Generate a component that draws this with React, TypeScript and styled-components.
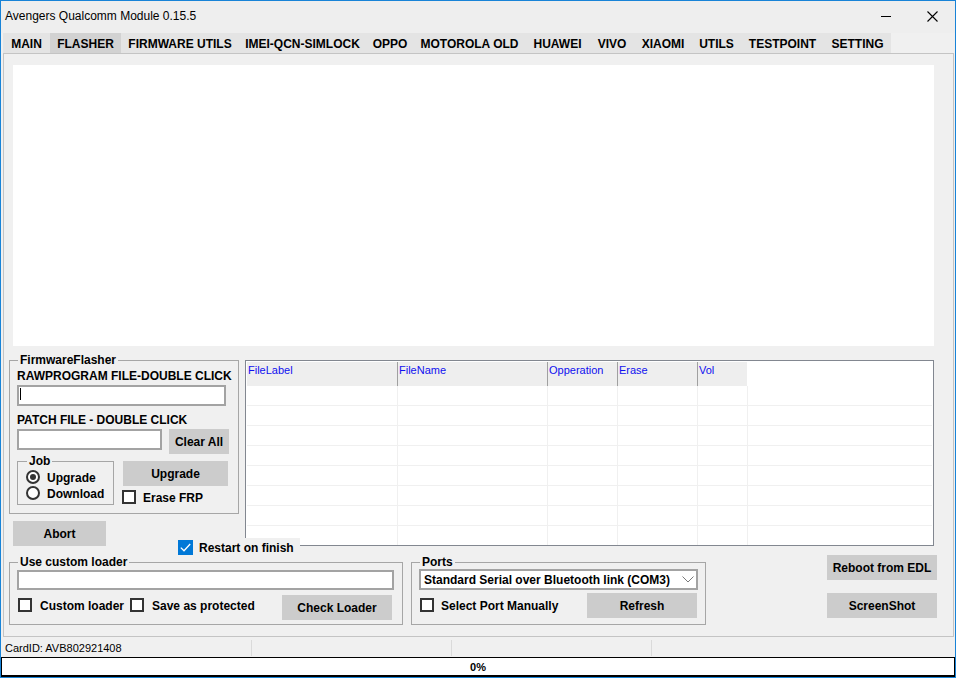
import React from 'react';
import styled, { createGlobalStyle } from 'styled-components';

const GlobalStyle = createGlobalStyle`
    * {
        box-sizing: border-box;
    }

    html,
    body {
        margin: 0;
        padding: 0;
        background: #f0f0f0;
        overflow: hidden;
    }

    body {
        font-family: "Liberation Sans", Arial, sans-serif;
        color: #000;
    }
`;

const Window = styled.div`
    width: 956px;
    height: 678px;
    border: 1px solid #1883d7;
    background: #f0f0f0;
    display: flex;
    flex-direction: column;
`;

const TitleBar = styled.div`
    height: 32px;
    flex: none;
    display: flex;
    align-items: center;
    background: #eeeeee;
    padding: 0 0 2px 4px;
    font-size: 12px;
`;

const WinControls = styled.div`
    margin-left: auto;
    display: flex;
    height: 100%;
`;

const WinButton = styled.div`
    width: 46px;
    height: 100%;
    display: flex;
    align-items: center;
    justify-content: center;
`;

const TabStrip = styled.div`
    height: 20px;
    flex: none;
    display: flex;
    margin-left: 2px;
`;

const Tab = styled.div<{ $w: number; $active?: boolean }>`
    width: ${(p) => p.$w}px;
    height: 20px;
    padding-top: 3px;
    background: ${(p) => (p.$active ? '#d2d2d2' : '#e4e4e4')};
    font-size: 12px;
    font-weight: bold;
    line-height: 17px;
    text-align: center;
    white-space: nowrap;
`;

const TabPage = styled.div`
    height: 584px;
    flex: none;
    margin: 0 1px 0 2px;
    border: 1px solid #c4c4c4;
    padding-left: 5px;
    display: flex;
    flex-direction: column;
`;

const LogBox = styled.div`
    flex: none;
    width: 921px;
    height: 281px;
    margin: 11px 0 0 4px;
    background: #fff;
`;

const MidRow = styled.div`
    position: relative;
    flex: none;
    height: 200px;
    display: flex;
    align-items: flex-start;
`;

const Column = styled.div<{ $mt?: number; $ml?: number; $gap?: number }>`
    display: flex;
    flex-direction: column;
    align-items: flex-start;
    gap: ${(p) => p.$gap ?? 0}px;
    margin-top: ${(p) => p.$mt ?? 0}px;
    margin-left: ${(p) => p.$ml ?? 0}px;
`;

const Row = styled.div<{ $mt?: number; $fill?: boolean }>`
    display: flex;
    align-items: flex-start;
    align-self: ${(p) => (p.$fill ? 'stretch' : 'auto')};
    margin-top: ${(p) => p.$mt ?? 0}px;
`;

const Group = styled.fieldset<{ $w: number; $px?: number; $pb?: number; $ml?: number }>`
    width: ${(p) => p.$w}px;
    min-width: 0;
    margin: 0 0 0 ${(p) => p.$ml ?? 0}px;
    padding: 0 ${(p) => p.$px ?? 7}px ${(p) => p.$pb ?? 0}px;
    border: 1px solid #a6a6a6;
    display: flex;
    flex-direction: column;
    align-items: flex-start;
`;

const Legend = styled.legend`
    margin-left: 1px;
    padding: 0 2px;
    font-size: 12px;
    font-weight: bold;
    line-height: 14px;
`;

const FieldLabel = styled.div<{ $mt?: number }>`
    height: 14px;
    margin-top: ${(p) => p.$mt ?? 0}px;
    padding-top: 1px;
    font-size: 12px;
    font-weight: bold;
    line-height: 14px;
    white-space: nowrap;
`;

const TextField = styled.div<{ $w: number; $h: number; $mt?: number; $caret?: boolean }>`
    position: relative;
    width: ${(p) => p.$w}px;
    height: ${(p) => p.$h}px;
    margin-top: ${(p) => p.$mt ?? 0}px;
    border: 2px solid #a3a3a3;
    background: #fff;

    &::before {
        content: '';
        display: ${(p) => (p.$caret ? 'block' : 'none')};
        position: absolute;
        left: 1px;
        top: 1px;
        width: 1px;
        height: 12px;
        background: #000;
    }
`;

const Button = styled.div<{ $w: number; $mt?: number; $ml?: number; $mr?: number; $push?: boolean }>`
    flex: none;
    width: ${(p) => p.$w}px;
    height: 25px;
    margin: ${(p) => p.$mt ?? 0}px ${(p) => p.$mr ?? 0}px 0
        ${(p) => (p.$push ? 'auto' : `${p.$ml ?? 0}px`)};
    background: #cccccc;
    display: flex;
    align-items: center;
    justify-content: center;
    font-size: 12px;
    font-weight: bold;
    white-space: nowrap;
`;

const Option = styled.div<{ $mt?: number; $ml?: number; $gap?: number }>`
    display: flex;
    align-items: center;
    gap: ${(p) => p.$gap ?? 7}px;
    margin-top: ${(p) => p.$mt ?? 0}px;
    margin-left: ${(p) => p.$ml ?? 0}px;
    font-size: 12px;
    font-weight: bold;
    line-height: 14px;
    white-space: nowrap;

    span + span {
        padding-top: 2px;
        line-height: 12px;
    }
`;

const Box = styled.span`
    flex: none;
    width: 14px;
    height: 14px;
    border: 2px solid #333;
    background: #fff;
`;

const RadioRow = styled.div`
    height: 16px;
    display: flex;
    align-items: center;
    gap: 7px;
    font-size: 12px;
    font-weight: bold;

    span + span {
        padding-top: 2px;
    }
`;

const Radio = styled.span<{ $checked?: boolean }>`
    flex: none;
    width: 14px;
    height: 14px;
    border: 2px solid #333;
    border-radius: 50%;
    background: #fff;
    display: flex;
    align-items: center;
    justify-content: center;

    &::after {
        content: '';
        width: 6px;
        height: 6px;
        border-radius: 50%;
        background: ${(p) => (p.$checked ? '#333' : 'transparent')};
    }
`;

const Grid = styled.div`
    flex: none;
    width: 689px;
    height: 186px;
    margin: 14px 0 0 6px;
    padding: 1px;
    border: 1px solid #828790;
    background: #fff;
    overflow: hidden;
`;

const GridRow = styled.div<{ $head?: boolean }>`
    display: flex;
    height: ${(p) => (p.$head ? 24 : 20)}px;
    border-bottom: ${(p) => (p.$head ? 'none' : '1px solid #f0f0f0')};
`;

const HeadCell = styled.div<{ $w: number; $first?: boolean }>`
    flex: none;
    width: ${(p) => p.$w}px;
    padding: 2px 0 0 1px;
    border-left: ${(p) => (p.$first ? 'none' : '1px solid #a0a0a0')};
    background: #eeeeee;
    color: #1010f0;
    font-size: 11px;
    line-height: 13px;
`;

const BodyCell = styled.div<{ $w?: number; $first?: boolean }>`
    flex: ${(p) => (p.$w ? 'none' : '1')};
    width: ${(p) => (p.$w ? `${p.$w}px` : 'auto')};
    border-left: ${(p) => (p.$first ? 'none' : '1px solid #f0f0f0')};
`;

const RestartToggle = styled.div`
    position: absolute;
    left: 167px;
    top: 192px;
    height: 19px;
    padding: 0 6px 0 2px;
    display: flex;
    align-items: center;
    gap: 6px;
    background: #f0f0f0;
    font-size: 12px;
    font-weight: bold;
    white-space: nowrap;
`;

const BlueCheck = styled.span`
    flex: none;
    width: 15px;
    height: 15px;
    background: #0078d7;
    display: flex;
    align-items: center;
    justify-content: center;
`;

const BottomRow = styled.div`
    flex: none;
    display: flex;
    align-items: flex-start;
    margin-top: 9px;
`;

const Select = styled.div`
    width: 279px;
    height: 21px;
    border: 2px solid #a3a3a3;
    background: #fff;
    display: flex;
    align-items: center;
    padding: 0 2px 0 3px;
    font-size: 12px;
    font-weight: bold;
    white-space: nowrap;

    svg {
        margin-left: auto;
    }
`;

const StatusBar = styled.div`
    height: 20px;
    flex: none;
    display: flex;
    font-size: 11px;
`;

const StatusCell = styled.div<{ $w?: number }>`
    flex: ${(p) => (p.$w ? 'none' : '1')};
    width: ${(p) => (p.$w ? `${p.$w}px` : 'auto')};
    height: 16px;
    margin-top: 3px;
    padding-left: 4px;
    line-height: 16px;
    border-right: ${(p) => (p.$w ? '1px solid #dadada' : 'none')};
    white-space: nowrap;
`;

const Progress = styled.div`
    height: 20px;
    flex: none;
    border: 1px solid #000;
    border-bottom-width: 2px;
    background: #fff;
    display: flex;
    align-items: center;
    justify-content: center;
    font-size: 11px;
    font-weight: bold;
`;

const tabs: { label: string; w: number }[] = [
    { label: 'MAIN', w: 47 },
    { label: 'FLASHER', w: 71 },
    { label: 'FIRMWARE UTILS', w: 118 },
    { label: 'IMEI-QCN-SIMLOCK', w: 127 },
    { label: 'OPPO', w: 48 },
    { label: 'MOTOROLA OLD', w: 111 },
    { label: 'HUAWEI', w: 65 },
    { label: 'VIVO', w: 44 },
    { label: 'XIAOMI', w: 58 },
    { label: 'UTILS', w: 49 },
    { label: 'TESTPOINT', w: 83 },
    { label: 'SETTING', w: 67 },
];

const columns: { label: string; w: number }[] = [
    { label: 'FileLabel', w: 150 },
    { label: 'FileName', w: 150 },
    { label: 'Opperation', w: 70 },
    { label: 'Erase', w: 80 },
    { label: 'Vol', w: 50 },
];

const CheckOption: React.FC<{ label: string; mt?: number; ml?: number; gap?: number }> = ({
    label,
    mt,
    ml,
    gap,
}) => (
    <Option $mt={mt} $ml={ml} $gap={gap}>
        <Box />
        <span>{label}</span>
    </Option>
);

export default function App() {
    return (
        <>
            <GlobalStyle />
            <Window>
                <TitleBar>
                    <span>Avengers Qualcomm Module 0.15.5</span>
                    <WinControls>
                        <WinButton>
                            <svg width="10" height="10" viewBox="0 0 10 10">
                                <path d="M0 5.5h10" stroke="#000" strokeWidth="1" />
                            </svg>
                        </WinButton>
                        <WinButton>
                            <svg width="11" height="11" viewBox="0 0 11 11">
                                <path d="M0.5 0.5l10 10M10.5 0.5l-10 10" stroke="#000" strokeWidth="1.1" />
                            </svg>
                        </WinButton>
                    </WinControls>
                </TitleBar>

                <TabStrip>
                    {tabs.map((t) => (
                        <Tab key={t.label} $w={t.w} $active={t.label === 'FLASHER'}>
                            {t.label}
                        </Tab>
                    ))}
                </TabStrip>

                <TabPage>
                    <LogBox />

                    <MidRow>
                        <Column $mt={7}>
                            <Group $w={230} $pb={8}>
                                <Legend>FirmwareFlasher</Legend>
                                <FieldLabel $mt={1}>RAWPROGRAM FILE-DOUBLE CLICK</FieldLabel>
                                <TextField $w={209} $h={21} $mt={3} $caret />
                                <FieldLabel $mt={6}>PATCH FILE - DOUBLE CLICK</FieldLabel>
                                <Row $mt={3}>
                                    <TextField $w={145} $h={21} />
                                    <Button $w={60} $ml={7}>Clear All</Button>
                                </Row>
                                <Row>
                                    <Group $w={97} $px={8} $pb={3}>
                                        <Legend>Job</Legend>
                                        <Column $mt={1}>
                                            <RadioRow>
                                                <Radio $checked />
                                                <span>Upgrade</span>
                                            </RadioRow>
                                            <RadioRow>
                                                <Radio />
                                                <span>Download</span>
                                            </RadioRow>
                                        </Column>
                                    </Group>
                                    <Column $ml={8}>
                                        <Button $w={105} $mt={7} $ml={1}>Upgrade</Button>
                                        <CheckOption label="Erase FRP" mt={4} gap={7} />
                                    </Column>
                                </Row>
                            </Group>
                            <Button $w={93} $mt={7} $ml={4}>Abort</Button>
                        </Column>

                        <Grid>
                            <GridRow $head>
                                {columns.map((c, i) => (
                                    <HeadCell key={c.label} $w={c.w} $first={i === 0}>
                                        {c.label}
                                    </HeadCell>
                                ))}
                            </GridRow>
                            {Array.from({ length: 8 }).map((_, r) => (
                                <GridRow key={r}>
                                    {columns.map((c, i) => (
                                        <BodyCell key={c.label} $w={c.w} $first={i === 0} />
                                    ))}
                                    <BodyCell />
                                </GridRow>
                            ))}
                        </Grid>

                        <RestartToggle>
                            <BlueCheck>
                                <svg width="11" height="9" viewBox="0 0 11 9">
                                    <path d="M0.8 4.6l3.2 3.2 6.2-6.8" fill="none" stroke="#fff" strokeWidth="1.3" />
                                </svg>
                            </BlueCheck>
                            <span>Restart on finish</span>
                        </RestartToggle>
                    </MidRow>

                    <BottomRow>
                        <Group $w={394} $pb={4}>
                            <Legend>Use custom loader</Legend>
                            <TextField $w={377} $h={20} $mt={1} />
                            <Row $mt={5} $fill>
                                <CheckOption label="Custom loader" mt={3} ml={1} gap={8} />
                                <CheckOption label="Save as protected" mt={3} ml={6} gap={8} />
                                <Button $w={110} $mr={3} $push>
                                    Check Loader
                                </Button>
                            </Row>
                        </Group>

                        <Group $w={295} $ml={8} $pb={6}>
                            <Legend>Ports</Legend>
                            <Select>
                                <span>Standard Serial over Bluetooth link (COM3)</span>
                                <svg width="12" height="7" viewBox="0 0 12 7">
                                    <path d="M0.5 0.5l5.5 5.5 5.5-5.5" fill="none" stroke="#7a7a7a" strokeWidth="1" />
                                </svg>
                            </Select>
                            <Row $mt={3} $fill>
                                <CheckOption label="Select Port Manually" mt={5} ml={1} gap={7} />
                                <Button $w={110} $mr={1} $push>
                                    Refresh
                                </Button>
                            </Row>
                        </Group>

                        <Column $ml={121} $gap={13}>
                            <Button $w={110}>Reboot from EDL</Button>
                            <Button $w={110}>ScreenShot</Button>
                        </Column>
                    </BottomRow>
                </TabPage>

                <StatusBar>
                    <StatusCell $w={251}>CardID: AVB802921408</StatusCell>
                    <StatusCell $w={200} />
                    <StatusCell $w={200} />
                    <StatusCell />
                </StatusBar>
                <Progress>0%</Progress>
            </Window>
        </>
    );
}
